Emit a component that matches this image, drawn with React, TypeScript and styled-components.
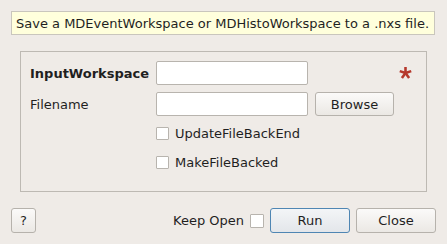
import React from 'react'
import styled, {createGlobalStyle} from 'styled-components'

const GlobalStyle = createGlobalStyle`
  html, body {
    margin: 0;
    padding: 0;
    background: #efebe7;
  }
  body {
    font-family: "DejaVu Sans", "Liberation Sans", sans-serif;
    font-size: 13px;
    color: #1f1f1f;
  }
`

const Dialog = styled.div`
  width: 447px;
  height: 244px;
  box-sizing: border-box;
  padding: 11px 11px 0 11px;
  display: flex;
  flex-direction: column;
`

const Tip = styled.div`
  width: 424px;
  height: 24px;
  box-sizing: border-box;
  background: #ffffdc;
  border: 1px solid #c9c6bd;
  display: flex;
  align-items: center;
  padding-left: 4px;
`

const Group = styled.div`
  margin: 16px 0 0 9px;
  width: 407px;
  height: 141px;
  box-sizing: border-box;
  border: 1px solid #bdb9b3;
  padding: 9px 0 0 9px;
  display: flex;
  flex-direction: column;
`

const Row = styled.div<{$gap?: number}>`
  display: flex;
  align-items: center;
  height: 24px;
  margin-bottom: ${p => p.$gap ?? 0}px;
`

const Label = styled.div<{$bold?: boolean}>`
  width: 126px;
  font-weight: ${p => (p.$bold ? 'bold' : 'normal')};
`

const Field = styled.div`
  width: 152px;
  height: 24px;
  box-sizing: border-box;
  background: #fff;
  border: 1px solid #b8b4ae;
  border-radius: 2px;
`

const Button = styled.div<{$w: number; $h?: number; $primary?: boolean}>`
  width: ${p => p.$w}px;
  height: ${p => p.$h ?? 25}px;
  box-sizing: border-box;
  border: 1px solid ${p => (p.$primary ? '#4f86b3' : '#b6b2ac')};
  border-radius: 3px;
  background: ${p =>
    p.$primary
      ? 'linear-gradient(#f3f5f7, #e3e6ea)'
      : 'linear-gradient(#fbfaf9, #ebe8e4)'};
  display: flex;
  align-items: center;
  justify-content: center;
`

const Star = styled.svg`
  margin-left: 5px;
`

const Check = styled.div<{$size?: number}>`
  width: ${p => p.$size ?? 13}px;
  height: ${p => p.$size ?? 13}px;
  box-sizing: border-box;
  background: #fff;
  border: 1px solid #b8b4ae;
  border-radius: 1px;
`

const CheckRow = styled.div<{$top: number}>`
  display: flex;
  align-items: center;
  gap: 6px;
  height: 13px;
  margin-left: 126px;
  margin-top: ${p => p.$top}px;
`

const Footer = styled.div`
  margin-top: 16px;
  width: 425px;
  display: flex;
  align-items: center;
`

const Spacer = styled.div`
  flex: 1;
`

const KeepOpen = styled.div`
  display: flex;
  align-items: center;
  gap: 6px;
  margin-right: 6px;
`

export default function App() {
  return (
    <>
      <GlobalStyle/>
      <Dialog>
        <Tip>Save a MDEventWorkspace or MDHistoWorkspace to a .nxs file.</Tip>
        <Group>
          <Row $gap={7}>
            <Label $bold>InputWorkspace</Label>
            <Field/>
            <Spacer/>
            <Star width="15" height="12" viewBox="0 0 16 14">
              <g stroke="#b5382c" strokeWidth="3" strokeLinecap="butt">
                <line x1="8" y1="7" x2="8" y2="0"/>
                <line x1="8" y1="7" x2="14.7" y2="4.8"/>
                <line x1="8" y1="7" x2="12.2" y2="12.8"/>
                <line x1="8" y1="7" x2="3.8" y2="12.8"/>
                <line x1="8" y1="7" x2="1.3" y2="4.8"/>
              </g>
            </Star>
            <div style={{width: 13}}/>
          </Row>
          <Row>
            <Label>Filename</Label>
            <Field/>
            <div style={{width: 7}}/>
            <Button $w={79} $h={24}>Browse</Button>
          </Row>
          <CheckRow $top={11}>
            <Check/>UpdateFileBackEnd
          </CheckRow>
          <CheckRow $top={16}>
            <Check/>MakeFileBacked
          </CheckRow>
        </Group>
        <Footer>
          <Button $w={25}>?</Button>
          <Spacer/>
          <KeepOpen>Keep Open <Check $size={14}/></KeepOpen>
          <Button $w={80} $primary>Run</Button>
          <div style={{width: 6}}/>
          <Button $w={80}>Close</Button>
        </Footer>
      </Dialog>
    </>
  )
}
